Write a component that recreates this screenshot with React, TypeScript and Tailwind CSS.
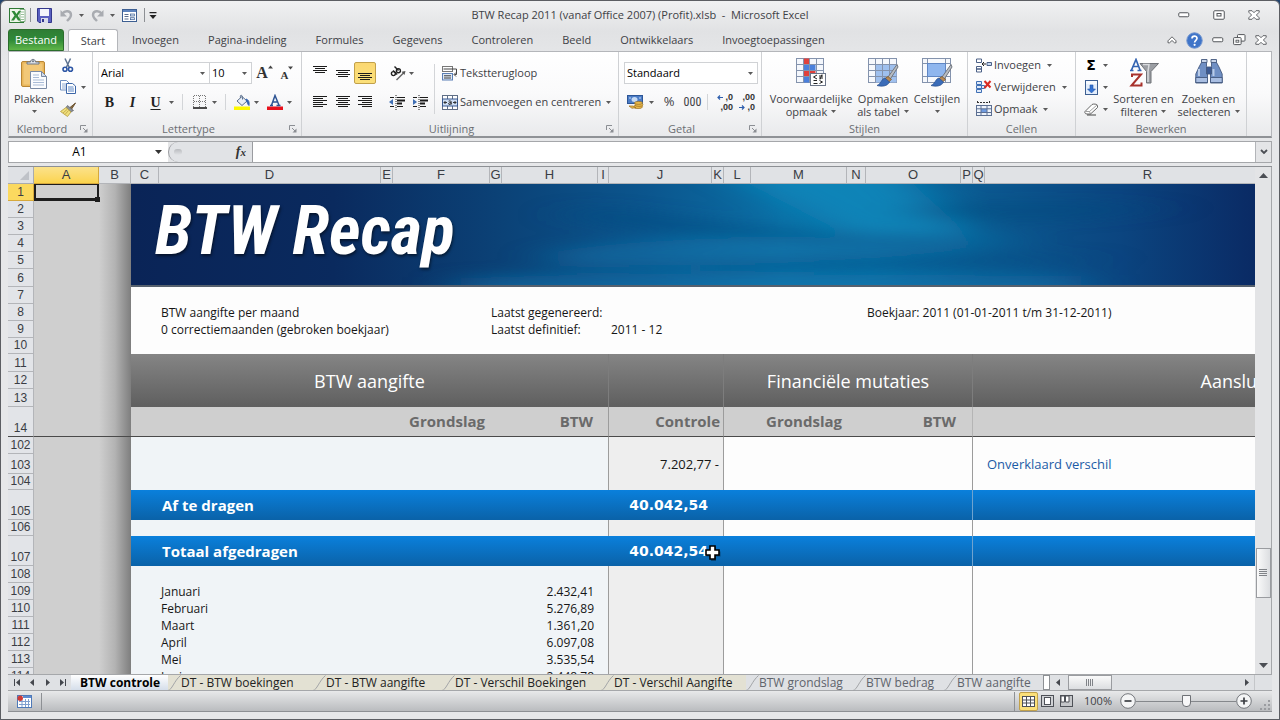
import React from "react";

type Kids = { children?: React.ReactNode };

/* ---------- small shared pieces ---------- */

const Caret = ({ className = "" }: { className?: string }) => (
  <svg className={`inline-block shrink-0 ${className}`} width="5" height="3" viewBox="0 0 5 3" aria-hidden="true">
    <path d="M0 0h5L2.5 3z" fill="#5a5a5a" />
  </svg>
);

const Sep = ({ className = "h-[20px]" }: { className?: string }) => (
  <span className={`w-px shrink-0 bg-[#d3d5d8] ${className}`} />
);

const Btn = ({ label, className = "", children }: Kids & { label: string; className?: string }) => (
  <button type="button" aria-label={label} className={`flex shrink-0 items-center justify-center ${className}`}>
    {children}
  </button>
);

const Drop = ({ label, className = "w-[9px]" }: { label: string; className?: string }) => (
  <Btn label={label} className={`h-[22px] ${className}`}>
    <Caret />
  </Btn>
);

/* ---------- icons ---------- */

const ExcelLogo = () => (
  <svg width="17" height="17" viewBox="0 0 17 17" aria-hidden="true">
    <rect x="0.5" y="1.5" width="14" height="14" fill="#eef6ea" stroke="#2f7a35" />
    <path d="M11 2.5h5v12h-5z" fill="#fff" stroke="#6aa06c" strokeWidth=".8" />
    <path d="M12 5h3M12 7.500h3M12 10h3M12 12.500h3" stroke="#7fb07f" strokeWidth=".8" />
    <path d="M2.500 4h3l2 3 2-3H12L8.800 8.700 12 13.500H9L7 10.300 5 13.500H2l3.500-4.900z" fill="#2f8a37" />
  </svg>
);

const SaveIcon = () => (
  <svg width="15" height="15" viewBox="0 0 15 15" aria-hidden="true">
    <path d="M1 .5h13.500v14H2L.5 13V.5z" fill="#5a60c0" stroke="#34388c" />
    <rect x="3" y="1" width="9" height="7" fill="#f3f5fb" />
    <rect x="4" y="10" width="7" height="5" fill="#d9dcea" />
    <rect x="5" y="11" width="2" height="3" fill="#34388c" />
  </svg>
);

const UndoIcon = ({ flip = false }: { flip?: boolean }) => (
  <svg width="13" height="13" viewBox="0 0 13 13" aria-hidden="true">
    <g transform={flip ? "matrix(-1 0 0 1 13 0)" : undefined}>
      <path d="M2.500 4.500C5 1 11 1.500 11 6c0 2.500-2 4-4 6" fill="none" stroke="#a9acb1" strokeWidth="2.400" />
      <path d="M.5 1v6.500H7z" fill="#a9acb1" />
    </g>
  </svg>
);

const FormIcon = () => (
  <svg width="15" height="13" viewBox="0 0 15 13" aria-hidden="true">
    <rect x=".5" y=".5" width="14" height="12" fill="#fff" stroke="#3d5f92" />
    <rect x="1" y="1" width="13" height="2" fill="#5d83bd" />
    <path d="M2.500 5.500h4M2.500 7.500h4M2.500 10h4" stroke="#5a6d8c" />
    <rect x="8.500" y="5" width="4" height="2" fill="#dbe6f5" stroke="#3d5f92" strokeWidth=".7" />
    <rect x="8.500" y="8.700" width="4" height="2" fill="#dbe6f5" stroke="#3d5f92" strokeWidth=".7" />
  </svg>
);

const MinIcon = () => (
  <svg width="12" height="6" viewBox="0 0 12 6" aria-hidden="true">
    <rect x=".75" y=".75" width="10" height="4" rx="1" fill="#fff" stroke="#53565a" />
  </svg>
);
const MaxIcon = () => (
  <svg width="12" height="10" viewBox="0 0 12 10" aria-hidden="true">
    <rect x=".75" y=".75" width="10.500" height="8.500" rx="1" fill="#fff" stroke="#53565a" />
    <rect x="4" y="3.500" width="4" height="2.500" fill="none" stroke="#53565a" />
  </svg>
);
const RestoreIcon = () => (
  <svg width="13" height="12" viewBox="0 0 13 12" aria-hidden="true">
    <rect x="4.500" y=".6" width="7.500" height="6.500" rx=".8" fill="#fff" stroke="#53565a" />
    <rect x=".6" y="3.600" width="7.500" height="7" rx=".8" fill="#fff" stroke="#53565a" />
    <rect x="3" y="6.200" width="2.800" height="2" fill="none" stroke="#53565a" strokeWidth=".9" />
  </svg>
);
const CloseIcon = () => (
  <svg width="12" height="10" viewBox="0 0 12 10" aria-hidden="true">
    <path d="M.8.700h3.200L6 2.700 8 .7h3.200v1.500L8.400 5l2.800 2.800v1.500H8L6 7.300 4 9.300H.8V7.800L3.600 5 .8 2.200z" fill="#fff" stroke="#53565a" strokeWidth=".9" />
  </svg>
);
const CollapseIcon = () => (
  <svg width="10" height="8" viewBox="0 0 10 8" aria-hidden="true">
    <path d="M5 .8l4 4v2H7.500L5 4.500 2.500 6.800H1v-2z" fill="#fff" stroke="#53565a" strokeWidth=".9" />
  </svg>
);
const HelpIcon = () => (
  <svg width="17" height="17" viewBox="0 0 17 17" aria-hidden="true">
    <circle cx="8.500" cy="8.500" r="7.700" fill="#3f74c8" stroke="#6e93cf" />
    <path d="M6 6.500c0-3.200 5-3.200 5-.2 0 2-2.400 2-2.400 4.200" fill="none" stroke="#fff" strokeWidth="1.700" />
    <circle cx="8.600" cy="12.800" r="1.100" fill="#fff" />
  </svg>
);

const PasteIcon = () => (
  <svg width="28" height="32" viewBox="0 0 28 32" aria-hidden="true">
    <rect x="1.500" y="3.500" width="23" height="25" rx="1.500" fill="#e9b65a" stroke="#b98634" />
    <rect x="3.500" y="5.500" width="19" height="21" fill="#f2c878" />
    <path d="M7 6V4h3.500c0-3.500 5-3.500 5 0H19v2z" fill="#dfe4ea" stroke="#6d7786" />
    <circle cx="13" cy="3.300" r="1" fill="#6d7786" />
    <path d="M10.500 13.500h11l5 5v12h-16z" fill="#fbfcfe" stroke="#7b8ba5" />
    <path d="M21.500 13.500v5h5z" fill="#d5deec" stroke="#7b8ba5" />
    <path d="M13 17h6M13 19.500h6M13 22h11M13 24.500h11M13 27h11" stroke="#a9bbd6" />
  </svg>
);
const CutIcon = () => (
  <svg width="12" height="15" viewBox="0 0 12 15" aria-hidden="true">
    <path d="M3 .5l4.300 9M8.500.5L4.300 9.500" stroke="#5d7290" strokeWidth="1.500" />
    <circle cx="3" cy="11.300" r="2" fill="none" stroke="#2d56a5" strokeWidth="1.600" />
    <circle cx="8.500" cy="11.300" r="2" fill="none" stroke="#2d56a5" strokeWidth="1.600" />
  </svg>
);
const CopyIcon = () => (
  <svg width="16" height="14" viewBox="0 0 16 14" aria-hidden="true">
    <path d="M.5.500h6l2.500 2.500v7H.5z" fill="#fff" stroke="#6f8fc0" />
    <path d="M2 4h5M2 6h5M2 8h5" stroke="#8faad2" />
    <path d="M6.500 3.500h6L15.500 6v7.500h-9z" fill="#fff" stroke="#3c66a8" />
    <path d="M8 7h5.500M8 9h6M8 11h6" stroke="#5c86c4" />
  </svg>
);
const BrushIcon = () => (
  <svg width="17" height="15" viewBox="0 0 17 15" aria-hidden="true">
    <path d="M15.500 1L10 5.500l1.500 1.700z" fill="#8b6b3d" stroke="#6b5230" />
    <path d="M7.500 3.500l6 5-2.500 1.500-5-4.500z" fill="#8a8f96" stroke="#5e6268" strokeWidth=".7" />
    <path d="M6 5.500L11 10 7.500 14.500 .5 9.500z" fill="#f0df7d" stroke="#b39a3c" strokeWidth=".8" />
    <path d="M3 11l4-3.500M5 12.500l3.500-4" stroke="#b39a3c" strokeWidth=".7" />
  </svg>
);

const GrowFont = ({ down = false }: { down?: boolean }) => (
  <span className="flex items-start">
    <span className={`font-['Liberation_Serif',serif] font-bold leading-none text-[#333] ${down ? "pt-[4px] text-[11px]" : "text-[16px]"}`}>A</span>
    <svg width="5" height="4" viewBox="0 0 5 4" aria-hidden="true">
      <path d={down ? "M0 .5h5L2.500 3.500z" : "M0 3.500h5L2.500.500z"} fill="#444" />
    </svg>
  </span>
);

const BorderIcon = () => (
  <svg width="14" height="14" viewBox="0 0 14 14" aria-hidden="true">
    <path d="M1 .5h12M1 6.500h12M.5 1v11M6.500 1v11M12.500 1v11" stroke="#777" strokeDasharray="1 1" />
    <path d="M0 13h14" stroke="#111" strokeWidth="1.500" />
  </svg>
);
const BucketIcon = () => (
  <svg width="16" height="16" viewBox="0 0 16 16" aria-hidden="true">
    <rect y="12.500" width="16" height="3.500" fill="#fdf800" />
    <path d="M3 7l5-4.500L13 7l-5 4.500z" fill="#eaf0f8" stroke="#5b6f8d" />
    <path d="M6.500 4c-1-4 2.500-4 2 1.500" fill="none" stroke="#5b6f8d" />
    <path d="M12 5c3 1 3.500 3.500 3 6.500-1.500-1-1.500-3-2.500-4.500z" fill="#3565b2" stroke="#3565b2" />
  </svg>
);
const FontColorIcon = () => (
  <svg width="16" height="16" viewBox="0 0 16 16" aria-hidden="true">
    <rect y="12.500" width="16" height="3.500" fill="#e8111c" />
    <path d="M3 11.500h3M9.500 11.500h4M4.500 11.200L8 1.500l4 9.700M5.700 8h4.500" stroke="#2e5594" strokeWidth="1.500" fill="none" />
  </svg>
);

const VAlign = ({ at }: { at: "top" | "mid" | "low" }) => {
  const y = at === "top" ? 1 : at === "mid" ? 5 : 8;
  return (
    <svg width="14" height="16" viewBox="0 0 14 16" aria-hidden="true">
      <path d={`M0 ${y + 0.5}h14M2 ${y + 2.5}h10M0 ${y + 4.5}h14M2 ${y + 6.5}h10`} stroke="#1c1c1c" />
    </svg>
  );
};
const HAlign = ({ side }: { side: "left" | "center" | "right" }) => {
  const x = side === "left" ? 0 : side === "center" ? 2 : 4;
  return (
    <svg width="14" height="13" viewBox="0 0 14 13" aria-hidden="true">
      <path d={`M0 .5h14M${x} 2.500h10M0 4.500h14M${x} 6.500h10M0 8.500h14M${x} 10.500h10`} stroke="#1c1c1c" />
    </svg>
  );
};
const IndentIcon = ({ out = false }: { out?: boolean }) => (
  <svg width="16" height="15" viewBox="0 0 16 15" aria-hidden="true">
    <path d="M1 2.500h4M1 11.500h4M8 2.500h8M8 11.500h6" stroke="#1c1c1c" />
    <path d="M8 5.500h8M8 8.500h5" stroke="#1c1c1c" strokeWidth="2" />
    <path d="M7 0v15" stroke="#1c1c1c" strokeDasharray="1 1" />
    <path d={out ? "M4 4v6L0 7z" : "M1 4v6l4-3z"} fill="#3f6fb5" />
  </svg>
);
const OrientIcon = () => (
  <svg width="16" height="15" viewBox="0 0 16 15" aria-hidden="true">
    <g fill="none" stroke="#222" strokeWidth="1.400">
      <circle cx="3.400" cy="7.600" r="2" />
      <path d="M3 4.400l4.200 4.200" />
      <circle cx="8.400" cy="4.800" r="2" />
      <path d="M4.500.500l4 4" />
      <path d="M6.500 14L13.500 7" stroke="#666" />
    </g>
    <path d="M15.500 5l-4 .8L14.500 9z" fill="#555" />
  </svg>
);
const WrapIcon = () => (
  <svg width="16" height="15" viewBox="0 0 16 15" aria-hidden="true">
    <rect x=".5" y=".5" width="10" height="5" fill="#fff" stroke="#777" />
    <path d="M1.500 3h13" stroke="#444" />
    <rect x=".5" y="7.500" width="10" height="6.500" fill="#dfe9f6" stroke="#5b7fb5" />
    <path d="M2 9.800h7M2 12h7" stroke="#3a3a3a" />
    <path d="M14.500 3v5.500h-2M14 6.500l-2 2 2 2" fill="none" stroke="#444" />
  </svg>
);
const MergeIcon = () => (
  <svg width="16" height="15" viewBox="0 0 16 15" aria-hidden="true">
    <rect x=".5" y=".5" width="15" height="14" fill="#fff" stroke="#5f6e86" />
    <path d="M5.500.500v4M10.500.500v4M5.500 11v4M10.500 11v4" stroke="#5f6e86" />
    <rect x=".5" y="4" width="15" height="7" fill="#cfdff5" stroke="#38598f" />
    <path d="M2 7.500h3M11 7.500h3M3.500 6L2 7.500 3.500 9M12.500 6L14 7.500 12.500 9" stroke="#222" fill="none" strokeWidth=".9" />
    <path d="M6.600 6.200c2-.8 2.600 0 2.600 1v2.300M9 7.700c-3-.2-3 1.800-1.400 1.800.8 0 1.400-.6 1.400-1" stroke="#222" fill="none" />
  </svg>
);

const MoneyIcon = () => (
  <svg width="17" height="16" viewBox="0 0 17 16" aria-hidden="true">
    <rect x=".5" y="1.500" width="15" height="8" fill="#4b7cc6" stroke="#2c5596" />
    <ellipse cx="7.500" cy="5.500" rx="3" ry="2.500" fill="#c6daf4" />
    <path d="M2 4h2M12 4h2" stroke="#c6daf4" />
    <g fill="#e8b94c" stroke="#9b6f1e" strokeWidth=".7">
      <ellipse cx="11" cy="12.800" rx="4.500" ry="1.800" />
      <ellipse cx="12" cy="10.800" rx="4" ry="1.600" />
      <ellipse cx="11.500" cy="8.900" rx="4" ry="1.500" />
      <path d="M2 12h4l3 1.500-4 .8z" />
    </g>
  </svg>
);
const DecimalIcon = ({ more = false }: { more?: boolean }) => (
  <span className="relative flex h-[20px] w-[16px] flex-col font-['Liberation_Sans',sans-serif] text-[9px] font-bold leading-[10px] text-[#333]">
    <span className="text-right">{more ? ",0" : ",00"}</span>
    <span className="text-right">{more ? ",00" : ",0"}</span>
    <svg className={`absolute left-0 ${more ? "top-[3px]" : "bottom-[2px]"}`} width="6" height="5" viewBox="0 0 6 5" aria-hidden="true">
      <path d={more ? "M6 2.500H1M3 .5l-2 2 2 2" : "M0 2.500h5M3 .5l2 2-2 2"} fill="none" stroke="#2f5fae" strokeWidth="1.200" />
    </svg>
  </span>
);

const CondIcon = () => (
  <svg width="30" height="30" viewBox="0 0 30 30" aria-hidden="true">
    <rect x=".5" y=".5" width="27" height="24" fill="#f4f7fc" stroke="#8493ad" />
    <rect x="7.500" y=".5" width="6" height="6" fill="#e0413c" />
    <rect x="7.500" y="6.500" width="12" height="6" fill="#4a80dc" />
    <rect x="7.500" y="12.500" width="12" height="6" fill="#e0413c" />
    <rect x="7.500" y="18.500" width="6" height="6" fill="#4a80dc" />
    <path d="M.5 6.500h27M.5 12.500h27M.5 18.500h27M7.500.500v24M13.500.500v24M20.500.500v24" stroke="#8493ad" />
    <rect x="14.500" y="15.500" width="15" height="12" fill="#fff" stroke="#6c7688" />
    <path d="M21 17l-3.500 2 3.500 2M17.500 22.500H21M23 18h4M23 20h4M26 16.500l-2 5M17.500 25.500h4M23.500 22.500l3 1.500-3 1.500" stroke="#222" fill="none" />
  </svg>
);
const Paint = () => (
  <g>
    <path d="M30 6.500L21 19l2 2.500L31 9z" fill="#b8bcc2" stroke="#71767e" />
    <path d="M21 18.500l-3 2 3 4 3.500-3z" fill="#b88a55" stroke="#7e5a2e" strokeWidth=".8" />
    <path d="M18 20c-4 1-3 5-8 7.500 5 1.500 11 .5 12.500-3.500z" fill="#3b6cb8" stroke="#29508e" strokeWidth=".7" />
  </g>
);
const TableIcon = () => (
  <svg width="32" height="30" viewBox="0 0 32 30" aria-hidden="true">
    <rect x="1.500" y=".5" width="28" height="24" fill="#f6f8fc" stroke="#8493ad" />
    <rect x="8.500" y="6.500" width="21" height="18" fill="#9fc0ee" />
    <path d="M1.500 6.500h28M1.500 12.500h28M1.500 18.500h28M8.500.500v24M15.500.500v24M22.500.500v24" stroke="#8493ad" />
    <Paint />
  </svg>
);
const StyleIcon = () => (
  <svg width="32" height="30" viewBox="0 0 32 30" aria-hidden="true">
    <rect x="1.500" y=".5" width="28" height="24" fill="#f6f8fc" stroke="#8493ad" />
    <path d="M1.500 5.500h28M1.500 18.500h28M6.500.500v24M24.500.500v24" stroke="#8493ad" />
    <rect x="6.500" y="5.500" width="18" height="13" fill="#8fb6ee" stroke="#5f86c4" />
    <Paint />
  </svg>
);

const InsertIcon = () => (
  <svg width="16" height="15" viewBox="0 0 16 15" aria-hidden="true">
    <path d="M.5 1h5v3.500h-5zM.5 8.500h5v2.500h-5zM.5 11h5v3h-5z" fill="#fff" stroke="#4c6187" />
    <path d="M11 4.500h4.500v3H11z" fill="#c7d9f2" stroke="#4c6187" />
    <path d="M6 6h4M8 4L6 6l2 2" stroke="#222" fill="none" />
  </svg>
);
const DeleteIcon = () => (
  <svg width="16" height="15" viewBox="0 0 16 15" aria-hidden="true">
    <path d="M.5 1.500h5v3h-5zM.5 5.500h5v3h-5zM.5 9.500h5v3h-5zM5.500 5.500h3v3h-3z" fill="#dfe9f8" stroke="#3f6fb5" />
    <path d="M8.500 1l6 6.500M14.500 1L8.500 8" stroke="#d92b24" strokeWidth="2" />
  </svg>
);
const FormatIcon = () => (
  <svg width="16" height="16" viewBox="0 0 16 16" aria-hidden="true">
    <path d="M1 1.500h13M1.500 0v3M13.500 0v3" stroke="#333" strokeDasharray="2 1" />
    <rect x=".5" y="4.500" width="15" height="10" fill="#eef3fb" stroke="#5c6f92" />
    <rect x="5" y="8" width="6" height="3.500" fill="#6f9be0" />
    <path d="M.5 7.800h15M.5 11.500h15M5 4.500v10M11 4.500v10" stroke="#5c6f92" />
  </svg>
);
const FillIcon = () => (
  <svg width="13" height="15" viewBox="0 0 13 15" aria-hidden="true">
    <rect x=".5" y=".5" width="12" height="14" fill="#e4eefc" stroke="#3d5f92" />
    <path d="M1 2.500h11" stroke="#f8fbff" strokeWidth="3" />
    <path d="M5 5h3v4h2.500L6.500 13 2.500 9H5z" fill="#3272d4" stroke="#2657a8" strokeWidth=".6" />
  </svg>
);
const EraserIcon = () => (
  <svg width="15" height="13" viewBox="0 0 15 13" aria-hidden="true">
    <path d="M1 8.500L8 1.500c1-.8 5.500-.6 5.500 1v2l-7 6.500H3C1 11 .5 9.500 1 8.500z" fill="#fff" stroke="#666" />
    <path d="M1.500 8.500h4l7.500-6.500M5.500 8.500L6.500 11" stroke="#888" fill="none" strokeWidth=".8" />
    <path d="M3 12h9" stroke="#444" />
  </svg>
);
const SortIcon = () => (
  <svg width="30" height="30" viewBox="0 0 30 30" aria-hidden="true">
    <path d="M1 12.500h3.500M8.500 12.500h4M2.500 12L7 1.500l4 10.500M4.500 8.500h5" stroke="#3565b2" strokeWidth="1.700" fill="none" />
    <path d="M12.500 16.500H3v2.500M3 16.500l9 0L2.500 27.500H12.500v-3" stroke="#a8322c" strokeWidth="2" fill="none" />
    <path d="M11 5.500h18.500L22 13.500V25h-4.500V13.500z" fill="#9b9ea3" stroke="#6f7277" />
    <path d="M14 6.500h6l-1 7v10.500" stroke="#d9dbde" fill="none" strokeWidth="1.500" />
  </svg>
);
const FindIcon = () => (
  <svg width="28" height="28" viewBox="0 0 28 28" aria-hidden="true">
    <g stroke="#44597f" strokeWidth=".9">
      <path d="M7 3.500h4.500v5l1 6v10.500H.8V16L4 9z" fill="#6f8fc4" />
      <path d="M21 3.500h-4.500v5l-1 6v10.500h11.700V16L24 9z" fill="#6f8fc4" />
      <path d="M11.500 9h5v7h-5z" fill="#3d5a92" />
      <path d="M6.500 1.500h5.500v3H6.500zM16 1.500h5.500v3H16z" fill="#c9d5ea" />
      <path d="M.8 19.500h11.700v5H.8zM15.500 19.500h11.700v5H15.500z" fill="#a9bee2" />
    </g>
    <path d="M4 11v7M18.500 11v7" stroke="#b9cbe8" strokeWidth="2" />
  </svg>
);
const Launcher = () => (
  <button type="button" aria-label="Dialoogvenster openen" className="absolute bottom-[3px] right-[4px]">
    <svg width="8" height="8" viewBox="0 0 8 8" aria-hidden="true">
      <path d="M.5 5V.500H6M3 3l3 3" stroke="#8b8e93" fill="none" />
      <path d="M7.500 3.500v4h-4z" fill="#8b8e93" />
    </svg>
  </button>
);

/* ---------- ribbon ---------- */

const Group = ({ title, className, launcher = false, children }: Kids & { title: string; className: string; launcher?: boolean }) => (
  <section aria-label={title} className={`relative flex h-full shrink-0 flex-col border-r border-[#cfd1d4] ${className}`}>
    <div className="flex h-[70px]">{children}</div>
    <div className={`text-center leading-[15px] text-[#6b6e73] ${launcher ? "pr-[17px]" : ""}`}>{title}</div>
    {launcher && <Launcher />}
  </section>
);

const Big = ({ icon, l1, l2, className }: { icon: React.ReactNode; l1: string; l2?: string; className: string }) => (
  <button type="button" className={`flex shrink-0 flex-col items-center pt-[6px] leading-[13px] ${className}`}>
    <span className="flex h-[34px] items-start justify-center">{icon}</span>
    <span className="whitespace-nowrap">{l1}</span>
    <span className="flex h-[13px] items-center gap-1 whitespace-nowrap">
      {l2}
      <Caret />
    </span>
  </button>
);

const Small = ({ icon, text }: { icon: React.ReactNode; text: string }) => (
  <button type="button" className="flex h-[22px] items-center gap-[2px] whitespace-nowrap">
    {icon}
    {text}
    <Caret className="ml-1" />
  </button>
);

const Picker = ({ label, value, className }: { label: string; value: string; className: string }) => (
  <label className={`relative flex h-[22px] items-center border border-[#d0d2d5] bg-white ${className}`}>
    <select aria-label={label} defaultValue={value} className="h-full w-full appearance-none bg-transparent pl-[2px] text-black outline-none">
      <option>{value}</option>
    </select>
    <Caret className="pointer-events-none absolute right-[4px]" />
  </label>
);

const Ribbon = () => (
  <div className="flex h-[87px] shrink-0 border border-b-2 border-[#b4b6ba] border-b-[#8f9296] border-l-[#c4c6c9] bg-linear-to-b from-white via-[#fafafb] to-[#e9eaec] text-[#3e4145]">
    <Group title="Klembord" className="w-[84px]" launcher>
      <Big icon={<PasteIcon />} l1="Plakken" className="w-[50px]" />
      <div className="flex flex-col pt-[2px]">
        <div className="flex h-[22px] items-center"><Btn label="Knippen" className="w-[18px]"><CutIcon /></Btn></div>
        <div className="flex h-[22px] items-center"><Btn label="Kopiëren" className="w-[18px]"><CopyIcon /></Btn><Drop label="Kopieeropties" className="w-[12px]" /></div>
        <div className="flex h-[22px] items-center"><Btn label="Opmaak kopiëren" className="w-[18px]"><BrushIcon /></Btn></div>
      </div>
    </Group>

    <Group title="Lettertype" className="w-[209px]" launcher>
      <div className="flex flex-col gap-[3px] pl-[5px] pt-2">
        <div className="flex h-[26px] items-center">
          <Picker label="Lettertype" value="Arial" className="w-[112px]" />
          <Picker label="Tekengrootte" value="10" className="w-[42px] border-l-0" />
          <Btn label="Lettertype vergroten" className="w-[25px]"><GrowFont /></Btn>
          <Btn label="Lettertype verkleinen" className="w-[20px]"><GrowFont down /></Btn>
        </div>
        <div className="flex h-[26px] items-center font-['Liberation_Serif',serif] text-[14px] font-bold text-[#222]">
          <Btn label="Vet" className="w-[23px]">B</Btn>
          <Btn label="Cursief" className="w-[23px] italic">I</Btn>
          <Btn label="Onderstrepen" className="w-[23px] underline underline-offset-2">U</Btn>
          <Drop label="Onderstrepingsopties" />
          <Sep className="ml-1.5 h-[16px]" />
          <Btn label="Randen" className="ml-1.5 w-[21px]"><BorderIcon /></Btn>
          <Drop label="Randopties" />
          <Sep className="ml-1.5 h-[16px]" />
          <Btn label="Opvulkleur" className="ml-1.5 w-[20px]"><BucketIcon /></Btn>
          <Drop label="Opvulkleuren" />
          <Btn label="Tekstkleur" className="ml-1 w-[20px]"><FontColorIcon /></Btn>
          <Drop label="Tekstkleuren" />
        </div>
      </div>
    </Group>

    <Group title="Uitlijning" className="w-[317px]" launcher>
      <div className="flex flex-col gap-[3px] pl-[6px] pt-2">
        <div className="flex h-[26px] items-center">
          <Btn label="Boven uitlijnen" className="w-[23px]"><VAlign at="top" /></Btn>
          <Btn label="Midden uitlijnen" className="w-[23px]"><VAlign at="mid" /></Btn>
          <Btn label="Onder uitlijnen" className="h-[22px] w-[22px] rounded-[2px] border border-[#c2a14a] bg-linear-to-b from-[#fbd872] to-[#fbe07a]"><VAlign at="low" /></Btn>
          <Sep className="ml-1" />
          <Btn label="Afdrukstand" className="ml-2 w-[18px]"><OrientIcon /></Btn>
          <Drop label="Afdrukstandopties" />
        </div>
        <div className="flex h-[26px] items-center">
          <Btn label="Links uitlijnen" className="w-[23px]"><HAlign side="left" /></Btn>
          <Btn label="Centreren" className="w-[23px]"><HAlign side="center" /></Btn>
          <Btn label="Rechts uitlijnen" className="w-[22px]"><HAlign side="right" /></Btn>
          <Sep className="ml-1" />
          <Btn label="Inspringing verkleinen" className="ml-1 w-[23px]"><IndentIcon out /></Btn>
          <Btn label="Inspringing vergroten" className="w-[23px]"><IndentIcon /></Btn>
        </div>
      </div>
      <Sep className="ml-[3px] mt-3 h-[50px]" />
      <div className="flex flex-col gap-[3px] pl-[7px] pt-2">
        <button type="button" className="flex h-[26px] items-center gap-[2px]"><WrapIcon />Tekstterugloop</button>
        <button type="button" className="flex h-[26px] items-center gap-[2px] whitespace-nowrap"><MergeIcon />Samenvoegen en centreren<Caret className="ml-[3px]" /></button>
      </div>
    </Group>

    <Group title="Getal" className="w-[143px]" launcher>
      <div className="flex flex-col gap-[3px] pl-[5px] pt-2">
        <div className="flex h-[26px] items-center"><Picker label="Getalnotatie" value="Standaard" className="w-[134px]" /></div>
        <div className="flex h-[26px] items-center">
          <Btn label="Financiële notatie" className="w-[23px]"><MoneyIcon /></Btn>
          <Drop label="Valutaopties" />
          <Btn label="Procentnotatie" className="ml-0.5 w-[22px] text-[13px]">%</Btn>
          <Btn label="Duizendtalnotatie" className="w-[25px] font-['Roboto_Condensed','Roboto',sans-serif] text-[12px]">000</Btn>
          <Sep className="ml-[2px] h-[16px]" />
          <Btn label="Meer decimalen" className="ml-1.5 w-[22px]"><DecimalIcon more /></Btn>
          <Btn label="Minder decimalen" className="w-[22px]"><DecimalIcon /></Btn>
        </div>
      </div>
    </Group>

    <Group title="Stijlen" className="w-[206px]">
      <Big icon={<CondIcon />} l1="Voorwaardelijke" l2="opmaak" className="ml-[4px] w-[90px]" />
      <Big icon={<TableIcon />} l1="Opmaken" l2="als tabel" className="w-[54px]" />
      <Big icon={<StyleIcon />} l1="Celstijlen" className="w-[54px]" />
    </Group>

    <Group title="Cellen" className="w-[108px]">
      <div className="flex flex-col pl-[8px] pt-[2px]">
        <Small icon={<InsertIcon />} text="Invoegen" />
        <Small icon={<DeleteIcon />} text="Verwijderen" />
        <Small icon={<FormatIcon />} text="Opmaak" />
      </div>
    </Group>

    <Group title="Bewerken" className="w-[171px]">
      <div className="flex flex-col pl-[5px] pt-[2px]">
        <div className="flex items-center"><Btn label="Som" className="w-[20px] font-['DejaVu_Sans',sans-serif] text-[14px] font-bold leading-[22px] text-black">Σ</Btn><Drop label="Somopties" /></div>
        <div className="flex items-center"><Btn label="Doorvoeren" className="w-[20px]"><FillIcon /></Btn><Drop label="Doorvoeropties" /></div>
        <div className="flex items-center"><Btn label="Wissen" className="w-[20px]"><EraserIcon /></Btn><Drop label="Wisopties" /></div>
      </div>
      <Big icon={<SortIcon />} l1="Sorteren en" l2="filteren" className="w-[67px]" />
      <Big icon={<FindIcon />} l1="Zoeken en" l2="selecteren" className="w-[63px]" />
    </Group>
  </div>
);

/* ---------- worksheet ---------- */

const columns: [string, string][] = [
  ["A", "w-[65px]"], ["B", "w-[32px]"], ["C", "w-[28px]"], ["D", "w-[222px]"], ["E", "w-[12px]"],
  ["F", "w-[97px]"], ["G", "w-[12px]"], ["H", "w-[96px]"], ["I", "w-[11px]"], ["J", "w-[103px]"],
  ["K", "w-[12px]"], ["L", "w-[27px]"], ["M", "w-[96px]"], ["N", "w-[19px]"], ["O", "w-[95px]"],
  ["P", "w-[12px]"], ["Q", "w-[12px]"], ["R", "w-[326px]"],
];

type Cell = { span?: number; rows?: number; text?: React.ReactNode; cls?: string };

const line = "border-r border-[#9c9c9c]";
const zoneA = "bg-[#f0f4f7]";
const zoneB = "bg-[#eeeeee]";
const zoneC = "bg-[#fdfdfd]";
const head = "bg-linear-to-b from-[#858585] to-[#5f5f5f] text-center text-[18px] leading-[26px] text-white";
const sub = "bg-[#cfcfcf] border-b border-b-[#4a4a4a] text-right text-[15px] font-bold text-[#6a6a6a]";
const blue = "bg-linear-to-b from-[#0a80dc] to-[#0a62a8] text-[15px] font-bold text-white";
const blueDigits = "bg-linear-to-b from-[#0a80dc] to-[#0a62a8] text-right font-['DejaVu_Sans',sans-serif] text-[14px] font-bold text-white";

const emptyRow: Cell[] = [
  { span: 7, cls: `${zoneA} ${line}` },
  { span: 2, cls: `${zoneB} ${line}` },
  { span: 5, cls: `${zoneC} ${line}` },
  { span: 2, cls: zoneC },
];
const blankTop: Cell[] = [{ span: 16, cls: zoneC }];
const monthRow = (name: string, amount: string): Cell[] => [
  { cls: zoneA },
  { span: 3, text: name, cls: `${zoneA} pl-[2px]` },
  { span: 2, text: amount, cls: `${zoneA} pr-[4px] text-right` },
  { cls: `${zoneA} ${line}` },
  ...emptyRow.slice(1),
];

const Pointer = () => (
  <svg className="absolute left-[95px] top-[8px] z-10" width="18" height="18" viewBox="0 0 18 18" aria-hidden="true">
    <path d="M7 3h5v4.500h4.500v5H12V17H7v-4.500H2.500v-5H7z" fill="#000" opacity=".35" />
    <path d="M6 2h5v4h4v5h-4v4H6v-4H2V6h4z" fill="#fff" stroke="#000" strokeWidth="1.600" />
  </svg>
);

const totalRow = (name: string, amount: string, pointer = false): Cell[] => [
  { cls: blue },
  { span: 6, text: name, cls: `${blue} pl-[3px]` },
  { text: <>{amount}{pointer && <Pointer />}</>, cls: `${blueDigits} relative pr-[4px]` },
  { cls: blue },
  { span: 5, cls: `${blue} border-r border-[#6fa3cf]` },
  { span: 2, cls: blue },
];

const BannerArt = () => (
  <svg className="absolute inset-0 h-full w-[1125px]" viewBox="0 0 1125 102" preserveAspectRatio="none" aria-hidden="true">
    <defs>
      <linearGradient id="sea">
        <stop offset="0" stopColor="#0a2457" />
        <stop offset=".18" stopColor="#0a2a5e" />
        <stop offset=".33" stopColor="#0b4277" />
        <stop offset=".46" stopColor="#0b568e" />
        <stop offset=".58" stopColor="#0b70a6" />
        <stop offset=".66" stopColor="#0a6ea4" />
        <stop offset=".76" stopColor="#0b5990" />
        <stop offset=".88" stopColor="#0b4580" />
        <stop offset="1" stopColor="#0a2a64" />
      </linearGradient>
      <filter id="soft" filterUnits="userSpaceOnUse" x="0" y="-80" width="1125" height="260">
        <feGaussianBlur stdDeviation="26 7" />
      </filter>
    </defs>
    <rect width="1125" height="102" fill="url(#sea)" />
    <g filter="url(#soft)">
      <path d="M560-30h190l90 84-130-6z" fill="#108bbd" opacity=".75" />
      <path d="M450 22c150 16 270 40 440 32-130 24-310 0-450-18z" fill="#0a4a82" opacity=".55" />
      <path d="M420 68c160-26 330-6 480-16-100 32-320 26-470 32z" fill="#0f7bb0" opacity=".45" />
      <path d="M560 80c130-12 260-8 420-6-150 14-280 14-420 18z" fill="#0a4f88" opacity=".45" />
      <path d="M330 94c160-6 420-4 620-2v24H330z" fill="#0d77b0" opacity=".5" />
      <path d="M780 22c90-4 170-6 260 2-90 16-170 14-260 10z" fill="#0a4a7e" opacity=".45" />
    </g>
  </svg>
);

const rows: { n: number; h: string; cells: Cell[] }[] = [
  {
    n: 1, h: "h-[17px]", cells: [{
      span: 16, rows: 6, cls: "relative overflow-hidden border-b-2 border-[#56616e] bg-[#0a2a5e] align-top",
      text: (
        <>
          <BannerArt />
          <h1 className="relative pl-[24px] pt-[12px] font-['Liberation_Sans_Narrow','Roboto_Condensed',sans-serif] text-[68px] font-bold italic leading-[70px] text-white [text-shadow:1px_2px_3px_#0008]">BTW Recap</h1>
        </>
      ),
    }],
  },
  { n: 2, h: "h-[17px]", cells: [] },
  { n: 3, h: "h-[17px]", cells: [] },
  { n: 4, h: "h-[17px]", cells: [] },
  { n: 5, h: "h-[17px]", cells: [] },
  { n: 6, h: "h-[18px]", cells: [] },
  { n: 7, h: "h-[17px]", cells: blankTop },
  {
    n: 8, h: "h-[17px]", cells: [
      { cls: zoneC }, { span: 3, text: "BTW aangifte per maand", cls: `${zoneC} pl-[2px]` },
      { span: 3, text: "Laatst gegenereerd:", cls: `${zoneC} pl-px` }, { span: 2, cls: zoneC },
      { span: 3, cls: zoneC }, { span: 4, text: "Boekjaar: 2011 (01-01-2011 t/m 31-12-2011)", cls: `${zoneC} pl-px` },
    ],
  },
  {
    n: 9, h: "h-[17px]", cells: [
      { cls: zoneC }, { span: 3, text: "0 correctiemaanden (gebroken boekjaar)", cls: `${zoneC} pl-[2px]` },
      { span: 3, text: "Laatst definitief:", cls: `${zoneC} pl-px` }, { span: 2, text: "2011 - 12", cls: `${zoneC} pl-[2px]` },
      { span: 7, cls: zoneC },
    ],
  },
  { n: 10, h: "h-[16px]", cells: blankTop },
  {
    n: 11, h: "h-[18px]", cells: [
      { span: 7, rows: 3, text: "BTW aangifte", cls: `${head} border-r border-[#7d7d7d]` },
      { span: 2, rows: 3, cls: `${head} border-r border-[#7d7d7d]` },
      { span: 5, rows: 3, text: "Financiële mutaties", cls: `${head} border-r border-[#7d7d7d]` },
      { span: 2, rows: 3, text: "Aansluiting", cls: `${head} pl-[210px]` },
    ],
  },
  { n: 12, h: "h-[17px]", cells: [] },
  { n: 13, h: "h-[18px]", cells: [] },
  {
    n: 14, h: "h-[30px]", cells: [
      { span: 2, cls: sub }, { span: 2, text: "Grondslag", cls: `${sub} pr-[5px]` },
      { span: 2, text: "BTW", cls: `${sub} pr-[5px]` }, { cls: `${sub} border-r border-r-[#9c9c9c]` },
      { span: 2, text: "Controle", cls: `${sub} border-r border-r-[#9c9c9c] pr-[3px]` },
      { span: 2, text: "Grondslag", cls: `${sub} pr-[5px]` }, { span: 2, text: "BTW", cls: `${sub} pr-[5px]` },
      { cls: `${sub} border-r border-r-[#b5b5b5]` }, { span: 2, cls: sub },
    ],
  },
  { n: 102, h: "h-[17px]", cells: emptyRow },
  {
    n: 103, h: "h-[20px]", cells: [
      emptyRow[0],
      { span: 2, text: "7.202,77 -", cls: `${zoneB} ${line} pr-[4px] text-right text-[13px]` },
      emptyRow[2],
      { cls: zoneC }, { text: "Onverklaard verschil", cls: `${zoneC} pl-[2px] text-[13px] text-[#1c5ba6]` },
    ],
  },
  { n: 104, h: "h-[16px]", cells: emptyRow },
  { n: 105, h: "h-[30px]", cells: totalRow("Af te dragen", "40.042,54") },
  { n: 106, h: "h-[16px]", cells: emptyRow },
  { n: 107, h: "h-[30px]", cells: totalRow("Totaal afgedragen", "40.042,54", true) },
  { n: 108, h: "h-[17px]", cells: emptyRow },
  { n: 109, h: "h-[17px]", cells: monthRow("Januari", "2.432,41") },
  { n: 110, h: "h-[17px]", cells: monthRow("Februari", "5.276,89") },
  { n: 111, h: "h-[17px]", cells: monthRow("Maart", "1.361,20") },
  { n: 112, h: "h-[17px]", cells: monthRow("April", "6.097,08") },
  { n: 113, h: "h-[17px]", cells: monthRow("Mei", "3.535,54") },
  { n: 114, h: "h-[17px]", cells: monthRow("Juni", "2.448,78") },
];

const Sheet = () => (
  <div className="min-w-0 flex-1 overflow-hidden">
    <table className="w-[1303px] table-fixed border-separate border-spacing-0 text-[12px] leading-[15px] text-[#161616]">
      <colgroup>
        <col className="w-[26px]" />
        {columns.map(([c, w]) => <col key={c} className={w} />)}
      </colgroup>
      <thead>
        <tr className="h-[17px] font-['Liberation_Sans',sans-serif] text-[13px] leading-[16px] text-[#3a3d44]">
          <th scope="col" aria-label="Alles selecteren" className="border-b border-r border-[#a9abae] bg-[#dfe1e5] p-0">
            <svg className="ml-auto mr-[4px]" width="9" height="9" viewBox="0 0 9 9" aria-hidden="true"><path d="M9 0v9H0z" fill="#bfc2c8" /></svg>
          </th>
          {columns.map(([c]) => (
            <th key={c} scope="col" className={`border-b border-r p-0 font-normal ${c === "A" ? "border-[#d6a93c] bg-linear-to-b from-[#fbe28a] to-[#fbd44c]" : "border-[#b3b5b9] bg-[#e0e2e5]"}`}>{c}</th>
          ))}
        </tr>
      </thead>
      <tbody>
        {rows.map(({ n, h, cells }) => (
          <tr key={n} className={h}>
            <th scope="row" className={`border-b border-r p-0 text-center align-bottom font-['Liberation_Sans',sans-serif] text-[12px] font-normal text-[#3a3d44] ${n === 1 ? "border-[#d6a93c] bg-[#fbd95f]" : n === 14 ? "border-b-[#4a4a4a] border-r-[#b3b5b9] bg-[#e2e4e8]" : "border-[#b3b5b9] bg-[#e2e4e8]"}`}>{n}</th>
            <td className={`relative p-0 ${n === 14 ? "border-b border-[#4a4a4a]" : ""} ${n === 1 ? "border-2 border-t-1 border-b-3 border-[#1d1d1d]" : ""} bg-[#cfcfcf]`}>
              {n === 1 && <span className="absolute -bottom-[4px] -right-[3px] z-10 h-[5px] w-[5px] bg-[#1d1d1d]" />}
            </td>
            <td className={`bg-linear-to-r from-[#cfcfcf] via-[#b3b3b3] to-[#7e7e7e] p-0 ${n === 14 ? "border-b border-[#4a4a4a]" : ""}`} />
            {cells.map((c, i) => (
              <td key={i} colSpan={c.span} rowSpan={c.rows} className={`whitespace-nowrap py-0 ${c.cls ?? ""}`}>{c.text}</td>
            ))}
          </tr>
        ))}
      </tbody>
    </table>
  </div>
);

const VScroll = () => (
  <div className="flex w-[17px] shrink-0 flex-col items-center border-r border-[#a5a7aa] bg-[#e3e4e6]">
    <Btn label="Omhoog schuiven" className="h-[17px] w-full"><svg width="9" height="5" viewBox="0 0 9 5" aria-hidden="true"><path d="M4.500 0L9 5H0z" fill="#4b4e54" /></svg></Btn>
    <div className="grow-[364]" />
    <Btn label="Verticale schuifbalk" className="h-[50px] w-[15px] border border-[#9a9ca0] bg-linear-to-r from-[#fafafa] to-[#dcdee1]">
      <svg width="8" height="8" viewBox="0 0 8 8" aria-hidden="true"><path d="M0 .5h8M0 2.500h8M0 4.500h8M0 6.500h8" stroke="#808388" /></svg>
    </Btn>
    <div className="grow-[59]" />
    <Btn label="Omlaag schuiven" className="h-[17px] w-full"><svg width="9" height="5" viewBox="0 0 9 5" aria-hidden="true"><path d="M4.500 5L0 0h9z" fill="#4b4e54" /></svg></Btn>
  </div>
);

/* ---------- sheet tabs and status bar ---------- */

const Slant = () => (
  <svg className="shrink-0" width="13" height="16" viewBox="0 0 13 16" aria-hidden="true">
    <path d="M0 15.500C4 15 6 6 12.500.500" fill="none" stroke="#a2a4a7" />
  </svg>
);

const sheetTabs: [string, string][] = [
  ["DT - BTW boekingen", "w-[145px] bg-[#e3e1d3] text-[#222]"],
  ["DT - BTW aangifte", "w-[129px] bg-[#e3e1d3] text-[#222]"],
  ["DT - Verschil Boekingen", "w-[159px] bg-[#e3e1d3] text-[#222]"],
  ["DT - Verschil Aangifte", "w-[145px] bg-[#e3e1d3] text-[#222]"],
  ["BTW grondslag", "w-[107px] bg-[#dfe1e4] text-[#60646c]"],
  ["BTW bedrag", "w-[91px] bg-[#dfe1e4] text-[#60646c]"],
  ["BTW aangifte", "w-[98px] bg-[#dfe1e4] text-[#60646c]"],
];

const NavArrow = ({ label, d }: { label: string; d: string }) => (
  <Btn label={label} className="h-full w-[15px]"><svg width="7" height="7" viewBox="0 0 7 7" aria-hidden="true"><path d={d} fill="#45484e" /></svg></Btn>
);

const SheetTabs = () => (
  <div className="flex h-[17px] shrink-0 border-b border-t border-[#a5a7aa] bg-[#dfe1e4] text-[12px] leading-[15px]">
    <div className="flex w-[63px] shrink-0 pl-[2px]">
      <NavArrow label="Eerste blad" d="M0 0h1v7H0zM6 0v7L2 3.500z" />
      <NavArrow label="Vorig blad" d="M5 0v7L1 3.500z" />
      <NavArrow label="Volgend blad" d="M2 0v7l4-3.500z" />
      <NavArrow label="Laatste blad" d="M1 0v7l4-3.500zM6 0h1v7H6z" />
    </div>
    <button type="button" className="w-[97px] shrink-0 whitespace-nowrap bg-linear-to-b from-white to-[#d5deea] pl-[9px] text-left font-bold text-black">BTW controle</button>
    {sheetTabs.map(([name, cls]) => (
      <button key={name} type="button" className={`flex shrink-0 whitespace-nowrap text-left ${cls}`}><Slant />{name}</button>
    ))}
    <span className="mx-px w-[7px] shrink-0 border border-[#8d9094] bg-white" />
    <NavArrow label="Naar links schuiven" d="M5 0v7L1 3.500z" />
    <Btn label="Horizontale schuifbalk" className="ml-[2px] w-[44px] border border-[#9a9ca0] bg-linear-to-b from-[#fafafa] to-[#dcdee1]">
      <svg width="8" height="7" viewBox="0 0 8 7" aria-hidden="true"><path d="M.5 0v7M2.500 0v7M4.500 0v7M6.500 0v7" stroke="#808388" /></svg>
    </Btn>
    <div className="flex-1" />
    <NavArrow label="Naar rechts schuiven" d="M2 0v7l4-3.500z" />
    <div className="w-[18px] shrink-0 border-l border-[#c4c6c9]" />
  </div>
);

const ZoomBtn = ({ label, d }: { label: string; d: string }) => (
  <Btn label={label} className="w-[16px]">
    <svg width="16" height="16" viewBox="0 0 16 16" aria-hidden="true">
      <circle cx="8" cy="8" r="7.300" fill="#f4f5f6" stroke="#74777c" />
      <path d={d} stroke="#3c3f44" strokeWidth="1.700" />
    </svg>
  </Btn>
);

const StatusBar = () => (
  <div className="flex h-[21px] shrink-0 items-center border-b border-[#8d9094] bg-linear-to-b from-[#e8e9ea] to-[#babcbf] text-[#3e4145]">
    <Btn label="Macro opnemen" className="ml-[8px] w-[16px]">
      <svg width="15" height="13" viewBox="0 0 15 13" aria-hidden="true">
        <rect x=".5" y=".5" width="14" height="12" fill="#fff" stroke="#4e79b8" />
        <path d="M6 1h8v2H6z" fill="#5f8cd0" />
        <path d="M2 6.500h11M2 9.500h11M5 5v7M8.500 4v8M11.500 4v8" stroke="#7f9fcf" />
        <circle cx="3.200" cy="3.200" r="2.700" fill="#cf3a36" />
      </svg>
    </Btn>
    <Sep className="ml-[9px] h-[17px] !bg-[#8d9094]" />
    <div className="flex-1" />
    <Sep className="mr-[4px] h-[19px] !bg-[#8d9094]" />
    <Btn label="Normaal" className="h-[19px] w-[19px] rounded-[2px] border border-[#c2a14a] bg-[#fbe07a]">
      <svg width="13" height="11" viewBox="0 0 13 11" aria-hidden="true"><rect x=".5" y=".5" width="12" height="10" fill="#fff" stroke="#4e5157" /><path d="M.5 4h12M.5 7h12M4.500.500v10M8.500.500v10" stroke="#4e5157" /></svg>
    </Btn>
    <Btn label="Pagina-indeling" className="w-[19px]">
      <svg width="13" height="12" viewBox="0 0 13 12" aria-hidden="true"><rect x=".5" y=".5" width="12" height="11" fill="#d0d2d5" stroke="#4e5157" /><rect x="3.500" y="2.500" width="6" height="7" fill="#fff" stroke="#4e5157" /></svg>
    </Btn>
    <Btn label="Pagina-eindevoorbeeld" className="w-[19px]">
      <svg width="13" height="12" viewBox="0 0 13 12" aria-hidden="true"><rect x=".5" y=".5" width="12" height="11" fill="#c4c6c9" stroke="#4e5157" /><path d="M1 1h3.500v6H1zM5.500 1H9v6H5.500z" fill="#fff" stroke="#4e5157" /></svg>
    </Btn>
    <button type="button" className="w-[44px] text-center">100%</button>
    <ZoomBtn label="Uitzoomen" d="M4.500 8h7" />
    <input
      type="range"
      aria-label="In- en uitzoomen"
      min={0}
      max={100}
      defaultValue={50}
      className="h-[16px] w-[100px] appearance-none bg-[linear-gradient(#85888c,#85888c)] bg-[length:100%_1px] bg-center bg-no-repeat [&::-webkit-slider-thumb]:h-[12px] [&::-webkit-slider-thumb]:w-[9px] [&::-webkit-slider-thumb]:appearance-none [&::-webkit-slider-thumb]:rounded-b-[4px] [&::-webkit-slider-thumb]:border [&::-webkit-slider-thumb]:border-[#6e7176] [&::-webkit-slider-thumb]:bg-[#f7f7f8]"
    />
    <ZoomBtn label="Inzoomen" d="M4.500 8h7M8 4.500v7" />
    <svg className="ml-[7px] mr-[1px] self-end" width="12" height="12" viewBox="0 0 12 12" aria-hidden="true">
      <path d="M9 1h2v2H9zM5 5h2v2H5zM9 5h2v2H9zM1 9h2v2H1zM5 9h2v2H5zM9 9h2v2H9z" fill="#9a9ca0" />
    </svg>
  </div>
);

/* ---------- page ---------- */

const tabs = ["Invoegen", "Pagina-indeling", "Formules", "Gegevens", "Controleren", "Beeld", "Ontwikkelaars", "Invoegtoepassingen"];

export default function App() {
  return (
    <div className="h-screen bg-[#23456f]">
      <div className="flex h-full flex-col overflow-hidden rounded-t-[6px] border border-[#5c5e63] bg-[#e6e7e9] bg-linear-to-b from-[#f0f1f2] via-[#e1e2e4] to-[#e6e7e9] bg-no-repeat px-[7px] pb-[7px] font-['Open_Sans','Noto_Sans',sans-serif] text-[11px] text-[#3e4145] [background-size:100%_60px]">
        <header className="relative flex h-[28px] shrink-0 items-center">
          <div className="flex items-center pl-[1px]">
            <ExcelLogo />
            <Sep className="ml-[4px] h-[14px] !bg-[#8d9094]" />
            <Btn label="Opslaan" className="ml-[6px] w-[15px]"><SaveIcon /></Btn>
            <Btn label="Ongedaan maken" className="ml-[8px] w-[13px]"><UndoIcon /></Btn>
            <Drop label="Ongedaan maken opties" className="w-[16px]" />
            <Btn label="Opnieuw" className="w-[17px]"><UndoIcon flip /></Btn>
            <Drop label="Opnieuw opties" className="w-[13px]" />
            <Btn label="Formulier" className="ml-[2px] w-[17px]"><FormIcon /></Btn>
            <Sep className="ml-[6px] h-[14px] !bg-[#8d9094]" />
            <Btn label="Werkbalk aanpassen" className="ml-[4px] w-[8px]"><svg width="8" height="7" viewBox="0 0 8 7" aria-hidden="true"><path d="M.5 .7h7" stroke="#222" strokeWidth="1.200" /><path d="M.5 3h7L4 7z" fill="#222" /></svg></Btn>
          </div>
          <h2 className="pointer-events-none absolute inset-x-0 whitespace-pre text-center">BTW Recap 2011 (vanaf Office 2007) (Profit).xlsb  -  Microsoft Excel</h2>
          <div className="relative ml-auto flex items-center gap-[23px] pr-[12px]">
            <Btn label="Minimaliseren"><MinIcon /></Btn>
            <Btn label="Maximaliseren"><MaxIcon /></Btn>
            <Btn label="Sluiten"><CloseIcon /></Btn>
          </div>
        </header>

        <nav className="flex h-[22px] shrink-0 items-stretch">
          <button type="button" className="w-[56px] rounded-t-[3px] border border-[#2b6d2b] bg-linear-to-b from-[#2f7d35] via-[#2f8a38] to-[#5fb548] text-white">Bestand</button>
          <button type="button" className="-mb-px ml-[4px] w-[50px] rounded-t-[3px] border border-b-0 border-[#b4b6ba] bg-white">Start</button>
          <div className="flex gap-px">
            {tabs.map((t) => <button key={t} type="button" className="whitespace-nowrap px-[14px]">{t}</button>)}
          </div>
          <div className="ml-auto flex items-center gap-[9px] pr-[5px]">
            <Btn label="Lint minimaliseren"><CollapseIcon /></Btn>
            <Btn label="Help"><HelpIcon /></Btn>
            <Btn label="Venster minimaliseren"><MinIcon /></Btn>
            <Btn label="Venster herstellen"><RestoreIcon /></Btn>
            <Btn label="Venster sluiten"><CloseIcon /></Btn>
          </div>
        </nav>

        <Ribbon />

        <div className="my-[3px] flex h-[22px] shrink-0 border border-[#a5a7aa] bg-[#e4e5e7] text-[12px] text-black">
          <label className="relative flex w-[159px] shrink-0 items-center bg-white">
            <input aria-label="Naamvak" defaultValue="A1" className="w-full bg-transparent pr-[18px] text-center outline-none" />
            <svg className="absolute right-[6px]" width="7" height="4" viewBox="0 0 7 4" aria-hidden="true"><path d="M0 0h7L3.500 4z" fill="#333" /></svg>
          </label>
          <div className="flex w-[85px] shrink-0 items-center justify-between rounded-l-full border-l border-r border-[#9a9ca0] bg-[#e1e3e6] pl-[5px] pr-[6px]">
            <span className="h-[6px] w-[8px] rounded-full bg-linear-to-b from-[#b9bbbf] to-[#e1e3e6]" />
            <button type="button" aria-label="Functie invoegen" className="font-['Liberation_Serif',serif] text-[14px] font-bold italic leading-none text-[#333]">f<span className="text-[11px]">x</span></button>
          </div>
          <input aria-label="Formulebalk" className="min-w-0 flex-1 bg-white px-1 outline-none" />
          <Btn label="Formulebalk uitvouwen" className="w-[16px] border-l border-[#b3b5b9]"><svg width="8" height="6" viewBox="0 0 8 6" aria-hidden="true"><path d="M1 1l3 3 3-3" fill="none" stroke="#4b4e54" strokeWidth="1.800" /></svg></Btn>
        </div>

        <main className="flex min-h-0 flex-1 border-t border-[#8d9094]">
          <Sheet />
          <VScroll />
        </main>
        <SheetTabs />
        <StatusBar />
      </div>
    </div>
  );
}
